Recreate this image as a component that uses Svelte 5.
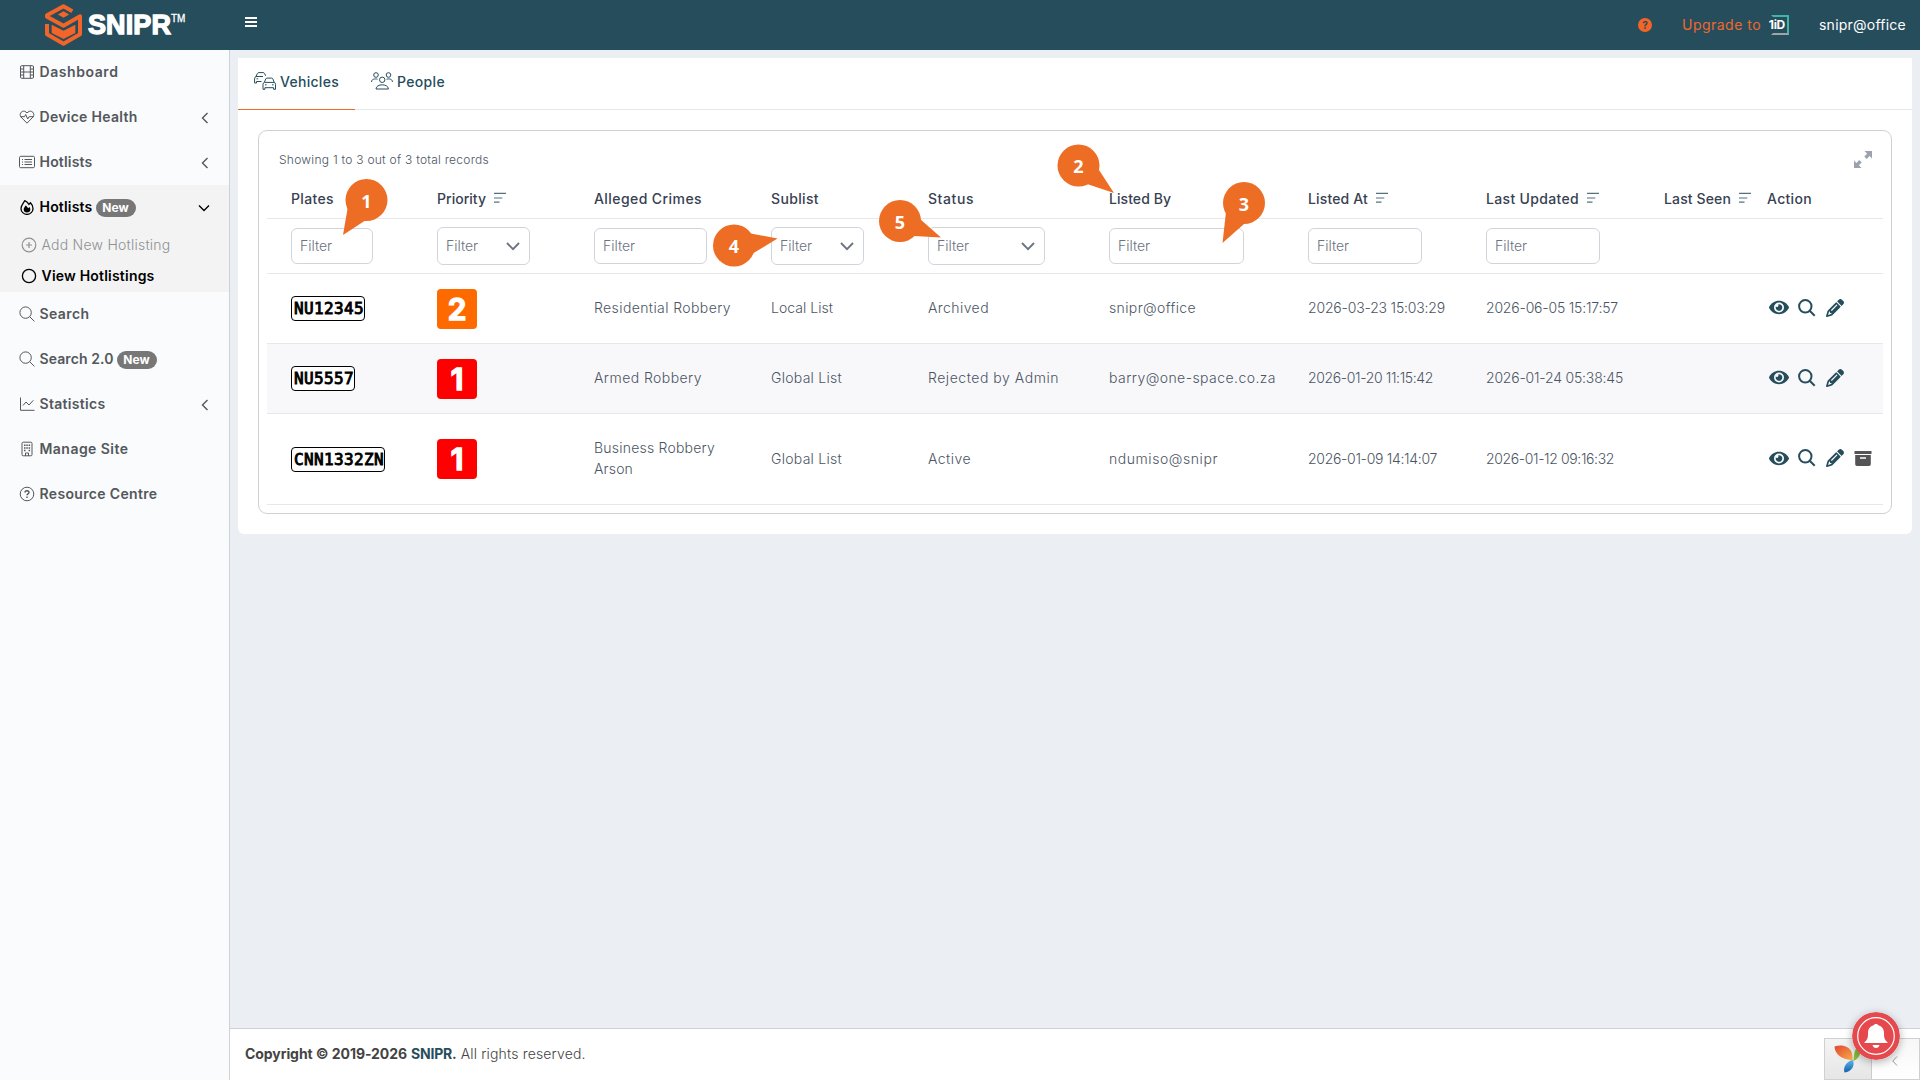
<script>
  // Spreads a label's letters so that it fills the given width in pixels.
  function fit(node, width) {
    const apply = () => {
      node.style.letterSpacing = '0px';
      const natural = node.getBoundingClientRect().width;
      node.style.letterSpacing = `${(width - natural) / node.textContent.length}px`;
    };
    apply();
    document.fonts?.ready.then(apply);
  }

  const menu = [
    { icon: 'film', label: 'Dashboard', w: 79 },
    { icon: 'heart', label: 'Device Health', w: 98, arrow: true },
    { icon: 'list', label: 'Hotlists', w: 53, arrow: true },
    {
      icon: 'fire', label: 'Hotlists', w: 53, badge: true, open: true,
      children: [
        { icon: 'plus', label: 'Add New Hotlisting', w: 129 },
        { icon: 'circle', label: 'View Hotlistings', w: 113, current: true },
      ],
    },
    { icon: 'search', label: 'Search', w: 50 },
    { icon: 'search', label: 'Search 2.0', w: 74, badge: true },
    { icon: 'chart', label: 'Statistics', w: 66, arrow: true },
    { icon: 'building', label: 'Manage Site', w: 89 },
    { icon: 'help', label: 'Resource Centre', w: 118 },
  ];

  const columns = [
    { label: 'Plates', w: 43, filter: 'text', fw: 82 },
    { label: 'Priority', w: 49, sort: true, filter: 'select', fw: 93 },
    { label: 'Alleged Crimes', w: 108, filter: 'text', fw: 113 },
    { label: 'Sublist', w: 48, filter: 'select', fw: 93 },
    { label: 'Status', w: 46, filter: 'select', fw: 117 },
    { label: 'Listed By', w: 62, filter: 'text', fw: 135 },
    { label: 'Listed At', w: 60, sort: true, filter: 'text', fw: 114 },
    { label: 'Last Updated', w: 93, sort: true, filter: 'text', fw: 114 },
    { label: 'Last Seen', w: 67, sort: true },
    { label: 'Action', w: 45 },
  ];

  const rows = [
    {
      plate: 'NU12345', priority: 2, crimes: [['Residential Robbery', 137]],
      cells: [['Local List', 62], ['Archived', 61], ['snipr@office', 87], ['2026-03-23 15:03:29', 137], ['2026-06-05 15:17:57', 132]],
    },
    {
      plate: 'NU5557', priority: 1, crimes: [['Armed Robbery', 108]],
      cells: [['Global List', 71], ['Rejected by Admin', 131], ['barry@one-space.co.za', 167], ['2026-01-20 11:15:42', 125], ['2026-01-24 05:38:45', 137]],
    },
    {
      plate: 'CNN1332ZN', priority: 1, crimes: [['Business Robbery', 121], ['Arson', 39]], archive: true,
      cells: [['Global List', 71], ['Active', 43], ['ndumiso@snipr', 109], ['2026-01-09 14:14:07', 129], ['2026-01-12 09:16:32', 128]],
    },
  ];

  const callouts = [
    { n: 1, x: 366.5, y: 200, points: '343,235 348,206 366,220' },
    { n: 2, x: 1078.5, y: 165.5, points: '1114,193 1099,170 1087,184' },
    { n: 3, x: 1244, y: 203, points: '1222.5,243 1226,212 1244,224' },
    { n: 4, x: 734, y: 245.5, points: '777.5,238.5 748,233 752,254' },
    { n: 5, x: 900, y: 221, points: '941,237.5 914,236 920,219' },
  ];
</script>

{#snippet icon(name)}
  <svg class="ico" viewBox="0 0 16 16" fill="none" stroke="currentColor">
    {#if name === 'film'}
      <rect x="1.5" y="1.7" width="13" height="12.6" rx="1.3" />
      <path d="M4.7 1.7v12.6M11.3 1.7v12.6M4.7 8h6.6M1.5 5h3.2M1.5 8h3.2M1.5 11h3.2M11.3 5h3.2M11.3 8h3.2M11.3 11h3.2" />
    {:else if name === 'heart'}
      <path d="M8 14.2 2 8C-.6 4.400 3.600.400 7 3l1 1 1-1c3.400-2.600 7.600 1.400 5 5zM1.500 7.700h4l1.200-2.200 2 4.500 1.400-2.300h4.400" />
    {:else if name === 'list'}
      <rect x=".5" y="2.300" width="15" height="11.400" rx="1.200" />
      <path d="M5.500 5.500h7.500M5.500 8h7.500M5.500 10.500h7.500M3 5.500h1M3 8h1M3 10.500h1" />
    {:else if name === 'fire'}
      <path stroke-width="1.300" d="M5.700 1.700C4.500 4 2 6.200 2 9.400a6 6 0 0 0 12 0c0-2.300-1.300-4.300-2.600-5.600l-1.500 1.600C9 4 7.700 2.500 5.700 1.700z" />
      <path fill="currentColor" stroke="none" d="M6.800 6.300C6 8 4.700 8.600 4.700 10.300a3.300 3.300 0 0 0 6.600 0c0-.9-.3-1.600-.8-2.200L9.200 9.300z" />
    {:else if name === 'search'}
      <circle cx="6.600" cy="6.600" r="5.700" />
      <path d="m10.700 10.700 4.700 4.700" />
    {:else if name === 'chart'}
      <path d="M1.500 1.500v12.800h14M4 9.500 7 6l3 3 4.300-4.700" />
    {:else if name === 'building'}
      <rect x="3" y="1.200" width="10" height="13.600" rx="1.200" />
      <path d="M6.500 15v-3h3v3" />
      <path stroke-width="1.500" d="M5 4.300h1.500M7.300 4.300h1.500M9.600 4.300h1.500M5 7h1.500M7.300 7h1.500M9.600 7h1.500M5 9.600h1.500M9.600 9.600h1.500" />
    {:else if name === 'help'}
      <circle cx="8" cy="8" r="6.800" />
      <path stroke-width="1.400" d="M6 6.500c0-2.400 4-2.400 4 0C10 8 8 7.800 8 9.300M8 10.500V12" />
    {:else if name === 'plus'}
      <circle cx="8" cy="8" r="6.800" stroke-width="1.200" /><path d="M8 5v6M5 8h6" stroke-width="1.200" />
    {:else if name === 'circle'}
      <circle cx="8" cy="8" r="6.600" stroke-width="1.300" />
    {/if}
  </svg>
{/snippet}

<div class="app">
  <header class="topbar">
    <div class="brand">
      <svg class="mark" viewBox="0 0 111 126" fill="none" stroke="#f26427" stroke-width="12">
        <path d="M82 22 55.500 7 6 34v4l49.500 27L105 37v54l-49.500 28L6 91V60" stroke-linejoin="round" />
        <path d="m55.500 22 17 9.500-17 9.500-17-9.500z" fill="#f26427" stroke="none" />
        <path d="m20 62 35.500 18L91 62v25l-35.500 18L20 87z" fill="#f26427" stroke="none" />
      </svg>
      <span class="name" use:fit={83}>SNIPR</span><span class="tm">TM</span>
    </div>
    <button class="burger" aria-label="Menu"><i></i><i></i><i></i></button>
    <div class="account">
      <span class="hint">?</span>
      <span class="upgrade"><span use:fit={79}>Upgrade to</span></span>
      <span class="iid"><b>1iD</b></span>
      <span class="user"><span use:fit={87}>snipr@office</span></span>
    </div>
  </header>

  <div class="body">
    <nav class="sidebar">
      {#each menu as item}
        <div class="group" class:open={item.open}>
          <div class="item">
            {@render icon(item.icon)}
            <span class="label"><span use:fit={item.w}>{item.label}</span></span>
            {#if item.badge}<span class="badge">New</span>{/if}
            {#if item.arrow}
              <svg class="arrow" viewBox="0 0 8 12"><path d="M6.500 1 1.500 6l5 5" /></svg>
            {:else if item.open}
              <svg class="arrow down" viewBox="0 0 12 8"><path d="m1 1.500 5 5 5-5" /></svg>
            {/if}
          </div>
          {#each item.children ?? [] as child}
            <div class="sub" class:current={child.current}>
              {@render icon(child.icon)}
              <span class="label"><span use:fit={child.w}>{child.label}</span></span>
            </div>
          {/each}
        </div>
      {/each}
    </nav>

    <div class="page">
      <main class="card">
        <div class="tabs">
          <div class="tab active">
            <svg class="tabico" viewBox="0 0 22 18" fill="none" stroke="currentColor">
              <path d="M7.500 9.500H2.500V11H.6V6.800Q.6 4.900 2 4.500L3.400 1.500Q3.800.6 4.800.6h4.400q1 0 1.400.9l1 2.400M2 4.500h7M2.500 6.800h1.700" />
              <path d="M9 17.300v-4.900q0-1.700 1.300-2L11.700 7q.4-.9 1.400-.9h4.400q1 0 1.400.9l1.300 3.400q1.300.3 1.300 2v4.900h-1.900v-1.600h-8.700v1.600zM10.300 10.400h9.900M11 12.800h1.600M18 12.800h1.600" />
            </svg>
            <span use:fit={59}>Vehicles</span>
          </div>
          <div class="tab">
            <svg class="tabico" viewBox="0 0 22 18" fill="none" stroke="currentColor">
              <circle cx="5" cy="3" r="2.300" /><circle cx="17.500" cy="3" r="2.300" /><circle cx="11.200" cy="7.800" r="2.700" />
              <path d="M.6 10C.6 6.800 3.600 6.600 6.500 7.200M21.400 10c0-3.200-3-3.400-5.900-2.800M5 17c0-5.600 12.400-5.600 12.400 0z" />
            </svg>
            <span use:fit={48}>People</span>
          </div>
        </div>

        <section class="panel">
          <div class="summary">
            <span use:fit={210}>Showing 1 to 3 out of 3 total records</span>
            <svg class="expand" viewBox="0 0 18 17">
              <path fill="currentColor" d="M10.500 0H18v7.500l-2.400-2.400-2.900 2.800-2.400-2.300 2.800-2.800zM7.500 17H0V9.500l2.400 2.400 2.900-2.800 2.400 2.300-2.800 2.800z" />
            </svg>
          </div>

          <div class="table">
            <div class="row head">
              {#each columns as col}
                <div class="th">
                  <span use:fit={col.w}>{col.label}</span>
                  {#if col.sort}
                    <svg class="sort" viewBox="0 0 13 12"><path d="M0 1h13M0 6h9M0 10.500h6" /></svg>
                  {/if}
                </div>
              {/each}
            </div>
            <div class="row filters">
              {#each columns as col}
                <div>
                  {#if col.filter}
                    <div class="field {col.filter}" style:width="{col.fw}px">
                      <span class="hold"><span use:fit={32}>Filter</span></span>
                      {#if col.filter === 'select'}
                        <svg class="caret" viewBox="0 0 14 9"><path d="m1 1 6 6.200L13 1" /></svg>
                      {/if}
                    </div>
                  {/if}
                </div>
              {/each}
            </div>
            {#each rows as row}
              <div class="row data" class:tall={row.archive}>
                <div><span class="plate">{row.plate}</span></div>
                <div><span class="priority" class:high={row.priority === 1}>{row.priority}</span></div>
                <div class="text">
                  {#each row.crimes as [text, w]}<div><span use:fit={w}>{text}</span></div>{/each}
                </div>
                {#each row.cells as [text, w]}
                  <div class="text"><span use:fit={w}>{text}</span></div>
                {/each}
                <div></div>
                <div class="actions">
                  <svg class="eye" viewBox="0 64 576 384"><path d="M572.520 241.400C518.290 135.590 410.930 64 288 64S57.680 135.640 3.480 241.410a32.350 32.350 0 0 0 0 29.190C57.710 376.410 165.070 448 288 448s230.320-71.640 284.520-177.410a32.350 32.350 0 0 0 0-29.190zM288 400a144 144 0 1 1 144-144 143.930 143.930 0 0 1-144 144zm0-240a95.310 95.310 0 0 0-25.310 3.790 47.850 47.850 0 0 1-66.900 66.900A95.780 95.780 0 1 0 288 160z" /></svg>
                  <svg class="find" viewBox="0 0 18 18"><circle cx="7.300" cy="7.300" r="6.200" /><path d="m11.700 11.700 5 5" /></svg>
                  <svg class="pencil" viewBox="0 0 512 512"><path d="M410.300 231l11.300-11.300-33.900-33.900-62.100-62.100L291.700 89.800l-11.300 11.300-22.600 22.600L58.600 322.900c-10.400 10.400-18 23.300-22.200 37.400L1 480.700c-2.500 8.400-.2 17.500 6.100 23.700s15.300 8.500 23.700 6.100l120.300-35.400c14.100-4.200 27-11.800 37.400-22.200L387.700 253.700 410.300 231zM160 399.400l-9.100 22.700c-4 3.100-8.500 5.400-13.300 6.900L59.400 452l23-78.100c1.400-4.900 3.800-9.400 6.900-13.300l22.700-9.100v32c0 8.800 7.200 16 16 16h32zM362.700 18.700L348.300 33.200 325.700 55.800 314.300 67.100l33.900 33.900 62.100 62.100 33.900 33.900 11.300-11.300 22.600-22.600 14.500-14.500c25-25 25-65.500 0-90.500L453.300 18.700c-25-25-65.500-25-90.500 0zm-47.400 168l-144 144c-6.200 6.200-16.400 6.200-22.600 0s-6.200-16.400 0-22.600l144-144c6.200-6.200 16.400-6.200 22.600 0s6.200 16.400 0 22.600z" /></svg>
                  {#if row.archive}
                    <svg class="archive" viewBox="0 0 18 15"><path fill-rule="evenodd" d="M.5 0h17v3H.5zM1.200 4h15.600v9.200q0 1.800-1.800 1.800H3q-1.800 0-1.800-1.800zM6 6.200v1.600h6V6.200z" /></svg>
                  {/if}
                </div>
              </div>
            {/each}
          </div>
        </section>
      </main>

      <footer>
        <strong><span use:fit={162}>Copyright © 2019-2026</span><a href="#top"><span use:fit={41}>SNIPR</span></a>.</strong>
        <span use:fit={125}>All rights reserved.</span>
      </footer>
    </div>
  </div>

  <svg class="callouts" viewBox="0 0 1920 1080">
    {#each callouts as c}
      <circle cx={c.x} cy={c.y} r="21" />
      <polygon points={c.points} />
      <text x={c.x} y={c.y + 7.500}>{c.n}</text>
    {/each}
  </svg>

  <div class="debug">
    <div class="yii">
      <svg viewBox="0 0 30 30">
        <defs>
          <linearGradient id="warm" x1="0" y1="0" x2="1" y2="1"><stop offset="0" stop-color="#e0452f" /><stop offset="1" stop-color="#f9b04b" /></linearGradient>
          <linearGradient id="cool" x1="0" y1="0" x2="0" y2="1"><stop offset="0" stop-color="#5bb6e8" /><stop offset="1" stop-color="#1560ae" /></linearGradient>
        </defs>
        <path fill="url(#warm)" d="M1.500 2.500C9 0 16 2 18.500 8c1 3 1.500 6 1 8.500C9 15 2 11 1.500 2.500z" />
        <path fill="url(#cool)" d="M20 16C14 17 9.500 23 11.500 28.500 19 27.500 22 21.500 20 16z" />
        <path fill="#86bd3c" d="M20.500 17c.5-4 0-8 3-13l4 3c-.5 5-3 8.500-7 10z" />
      </svg>
    </div>
    <svg class="fold" viewBox="0 0 6 10"><path d="M5 .5.800 5 5 9.500" /></svg>
  </div>
  <svg class="bell" viewBox="0 0 48 48">
    <circle cx="24" cy="24" r="24" fill="#e5494d" />
    <circle cx="24" cy="24" r="18.300" fill="none" stroke="#fff" stroke-width="1.200" />
    <path fill="#fff" d="M24 12c1.300 0 2 .6 2.300 1.300 3.600 1 5.700 3.700 5.700 7.700 0 5 .5 6.800 3.500 9.200V31h-23v-.8c3-2.400 3.500-4.200 3.500-9.200 0-4 2.100-6.700 5.700-7.700.3-.7 1-1.300 2.300-1.300zM20.500 33h7c-.5 2-1.800 3-3.500 3s-3-1-3.500-3z" />
  </svg>
</div>

<style>
  :global(body) { overflow: hidden; }
  .app {
    position: relative;
    display: flex;
    flex-direction: column;
    height: 1080px;
    font: 300 14px/21px Inter, "Open Sans", sans-serif;
    color: #4b5563;
    white-space: nowrap;
  }
  svg { display: block; flex: none; }

  .topbar { display: flex; height: 50px; background: #264d5c; color: #fff; }
  .brand { display: flex; width: 200px; padding: 4px 0 0 45px; box-sizing: border-box; }
  .mark { width: 37px; height: 42px; }
  .name {
    margin-left: 6px;
    font: 700 27px/43px "Liberation Sans", Arial, sans-serif;
    -webkit-text-stroke: 1.300px #fff;
  }
  .tm { font: 400 10px/12px "Liberation Sans", Arial, sans-serif; padding-top: 9px; -webkit-text-stroke: 0.300px #fff; }
  .burger {
    display: flex; flex-direction: column; gap: 2px;
    width: 12px; margin: 17px 0 0 45px; padding: 0; border: 0; background: none;
  }
  .burger i { height: 2px; background: #fff; }
  .account { display: flex; align-items: center; height: 49px; margin-left: auto; padding-right: 14px; font-weight: 400; }
  .hint {
    width: 14px; height: 14px; border-radius: 50%; background: #f26427; color: #264d5c;
    font: 700 10px/14px Inter, sans-serif; text-align: center;
  }
  .upgrade { width: 79px; margin-left: 30px; color: #f0662d; font-weight: 400; }
  .iid {
    position: relative; width: 18px; height: 20px; margin-left: 10px; box-sizing: border-box;
    border: 2px solid #3fb5a5; border-bottom-color: #a0a4a7; border-left-color: transparent;
  }
  .iid b { position: absolute; right: 2px; top: 0; font-size: 12px; line-height: 16px; letter-spacing: -0.300px; }
  .user { width: 87px; margin-left: 30px; }

  .body { display: flex; flex: 1; }
  .sidebar {
    width: 230px; box-sizing: border-box; background: #f9fbfd;
    border-right: 1px solid #ced2d8; color: #54575b; font-weight: 600;
  }
  .item { display: flex; align-items: center; height: 45px; padding-left: 19px; }
  .ico { width: 16px; height: 16px; margin-top: -1px; }
  .label { margin-left: 4.500px; padding-bottom: 2px; }
  .badge {
    width: 40px; height: 18px; margin-left: 3px; border-radius: 9px; background: #777; color: #fff;
    font-size: 12px; font-weight: 700; line-height: 18px; text-align: center;
  }
  .arrow { width: 8px; height: 12px; margin: 0 20px 0 auto; fill: none; stroke: currentColor; stroke-width: 1.400; }
  .arrow.down { width: 12px; height: 8px; margin-right: 19px; }
  .open { height: 107px; background: #f3f3f3; color: #000; }
  .sub { display: flex; align-items: center; height: 31px; padding-left: 21px; font-weight: 300; color: #8f9194; }
  .sub.current { color: #000; font-weight: 600; }

  .page { display: flex; flex: 1; flex-direction: column; background: #ebeef3; }
  .card {
    margin: 8px 8px 0; height: 476px; box-sizing: border-box; background: #fff; border-radius: 0 0 6px 6px;
  }
  .tabs { display: flex; height: 52px; box-sizing: border-box; border-bottom: 1px solid #e5e7eb; }
  .tab {
    display: flex; gap: 4px; width: 117px; height: 52px; padding: 13px 0 0 16px; box-sizing: border-box;
    color: #264d5c; font-weight: 500;
  }
  .tab.active { border-bottom: 1px solid #ed6d26; }
  .tabico { width: 22px; height: 18px; margin-top: 1px; }
  .panel {
    height: 384px; margin: 20px 20px 0; padding: 0 8px; box-sizing: border-box;
    border: 1px solid #d0d0d1; border-radius: 9px;
  }
  .summary {
    display: flex; justify-content: space-between; height: 46px; padding: 20px 11px 0 12px;
    box-sizing: border-box; font-size: 12px; line-height: 18px;
  }
  .expand { width: 18px; height: 17px; color: #9ca3af; }
  .row {
    display: grid; grid-template-columns: 146px 157px 177px 157px 181px 199px 178px 178px 103px 1fr;
    align-items: center; padding-left: 24px; box-sizing: border-box; border-bottom: 1px solid #e5e7eb;
  }
  .head { height: 42px; padding-top: 2px; color: #374151; font-weight: 500; }
  .th { display: flex; align-items: center; gap: 8px; }
  .sort { width: 12px; height: 12px; margin-top: -2px; fill: none; stroke: #55727e; stroke-width: 1.200; }
  .filters { height: 55px; }
  .field {
    display: flex; align-items: center; justify-content: space-between; height: 36px;
    padding: 0 9px 0 8px; box-sizing: border-box; border: 1px solid #d1d5db; border-radius: 6px; color: #6b7280;
  }
  .field.select { height: 38px; }
  .select .hold { padding-bottom: 1px; }
  .caret { width: 14px; height: 9px; fill: none; stroke: #6b7280; stroke-width: 1.800; }
  .data { height: 70px; color: #4b5563; }
  .data:nth-child(even) { background: #f8f8fb; }
  .data.tall { height: 91px; }
  .text { padding-bottom: 2px; }
  .plate {
    display: inline-block; height: 25px; padding: 0 0 0 2px; box-sizing: border-box; background: #fff;
    border: 1px solid #000; border-radius: 4px; color: #000;
    font: 400 16px/23px "DejaVu Sans Mono", monospace; letter-spacing: 0.370px;
    -webkit-text-stroke: 0.900px #000;
    vertical-align: middle;
  }
  .priority {
    display: block; width: 40px; height: 40px; border-radius: 4px; background: #ff6a00; color: #fff;
    font: 600 30px/40px Inter, sans-serif; text-align: center;
    -webkit-text-stroke: 1.600px #fff; stroke-linejoin: round;
  }
  .priority.high { background: #f00; }
  .actions { display: flex; align-items: center; height: 18px; margin-top: -2px; padding-left: 2px; fill: #264d5c; }
  .eye { width: 20px; height: 15px; }
  .find { width: 18px; height: 18px; margin-left: 9px; fill: none; stroke: #264d5c; stroke-width: 2; }
  .pencil { width: 18px; height: 18px; margin-left: 10px; }
  .archive { width: 18px; height: 15px; margin-left: 10px; fill: #545456; }

  footer {
    display: flex; gap: 4px; height: 52px; margin-top: auto; padding: 14px 0 0 15px; box-sizing: border-box;
    background: #fff; border-top: 1px solid #ced2d8; color: #444;
  }
  footer strong { display: flex; font-weight: 700; }
  footer a { margin-left: 4px; color: #264d5c; text-decoration: none; }

  .callouts { position: absolute; inset: 0; width: 1920px; height: 1080px; pointer-events: none; fill: #ed6d25; }
  .callouts text { fill: #fff; font: 700 18px "Open Sans", sans-serif; text-anchor: middle; }

  .debug {
    position: absolute; right: 0; bottom: 0; display: flex; align-items: center; width: 96px; height: 42px;
    box-sizing: border-box; border: 1px solid #d0d0d0; background: linear-gradient(#f7f7f7, #fff);
  }
  .yii { width: 46px; height: 40px; border-right: 1px solid #ccc; background: linear-gradient(#f4f4f4, #e6e6e6); }
  .yii svg { width: 30px; height: 30px; margin: 5px 0 0 8px; }
  .fold { width: 6px; height: 10px; margin: 3px 0 0 20px; fill: none; stroke: #999; }
  .bell {
    position: absolute; left: 1852px; top: 1012px; width: 48px; height: 48px; border-radius: 50%;
    box-shadow: 0 2px 8px rgba(0, 0, 0, 0.300);
  }
</style>
